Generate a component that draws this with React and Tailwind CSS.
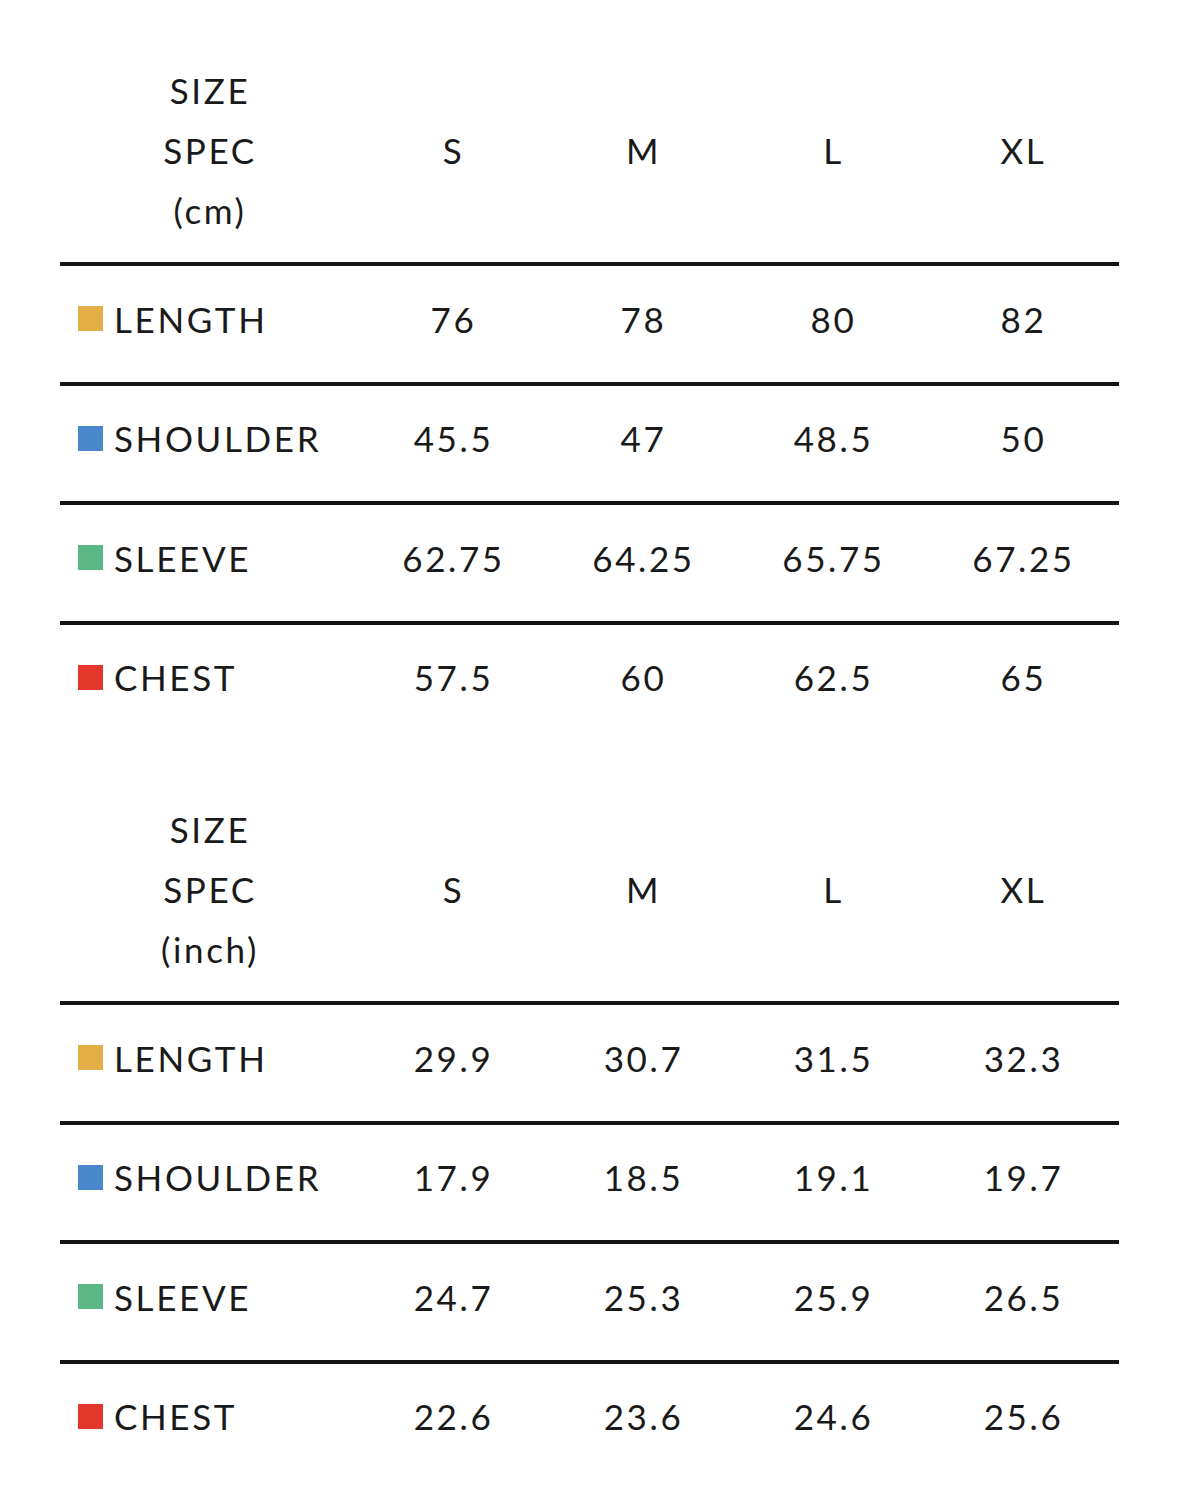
import React from "react";

const colors = {
  LENGTH: "bg-[#e2ae45]",
  SHOULDER: "bg-[#4a88cc]",
  SLEEVE: "bg-[#5bb884]",
  CHEST: "bg-[#e2372a]",
};

const tables = [
  {
    unit: "(cm)",
    rows: [
      ["LENGTH", "76", "78", "80", "82"],
      ["SHOULDER", "45.5", "47", "48.5", "50"],
      ["SLEEVE", "62.75", "64.25", "65.75", "67.25"],
      ["CHEST", "57.5", "60", "62.5", "65"],
    ],
  },
  {
    unit: "(inch)",
    rows: [
      ["LENGTH", "29.9", "30.7", "31.5", "32.3"],
      ["SHOULDER", "17.9", "18.5", "19.1", "19.7"],
      ["SLEEVE", "24.7", "25.3", "25.9", "26.5"],
      ["CHEST", "22.6", "23.6", "24.6", "25.6"],
    ],
  },
];

const SizeTable = ({ unit, rows, first }) => {
  return (
    <div className={first ? "pt-[60px]" : "pt-[59px]"}>
      {/* Header */}
      <div className="grid grid-cols-[297px_repeat(4,190px)] pb-[22px]">
        <div className="flex flex-col items-center leading-[60px] pl-[3px]">
          <span>SIZE</span>
          <span>SPEC</span>
          <span>{unit}</span>
        </div>
        {["S", "M", "L", "XL"].map((s) => (
          <div key={s} className="flex items-center justify-center pl-[3px]">
            {s}
          </div>
        ))}
      </div>

      {/* Rows */}
      {rows.map(([label, ...vals]) => (
        <div
          key={label}
          className="grid grid-cols-[297px_repeat(4,190px)] border-t-4 border-[#141414] h-[119.5px]"
        >
          <div className="flex items-center pl-[18px] pb-[10px]">
            <span className={`w-[25px] h-[25px] mr-[11px] ${colors[label]}`}></span>
            <span>{label}</span>
          </div>
          {vals.map((v, i) => (
            <div key={i} className="flex items-center justify-center pl-[3px] pb-[10px]">
              {v}
            </div>
          ))}
        </div>
      ))}
    </div>
  );
};

export default function App() {
  return (
    <div
      className="w-[1179px] h-[1512px] bg-white text-[#1a1a1a] text-[35px] tracking-[0.075em] px-[60px]"
      style={{ fontFamily: "Lato, 'Noto Sans', sans-serif" }}
    >
      {tables.map((t, i) => (
        <SizeTable key={t.unit} unit={t.unit} rows={t.rows} first={i === 0} />
      ))}
    </div>
  );
}
